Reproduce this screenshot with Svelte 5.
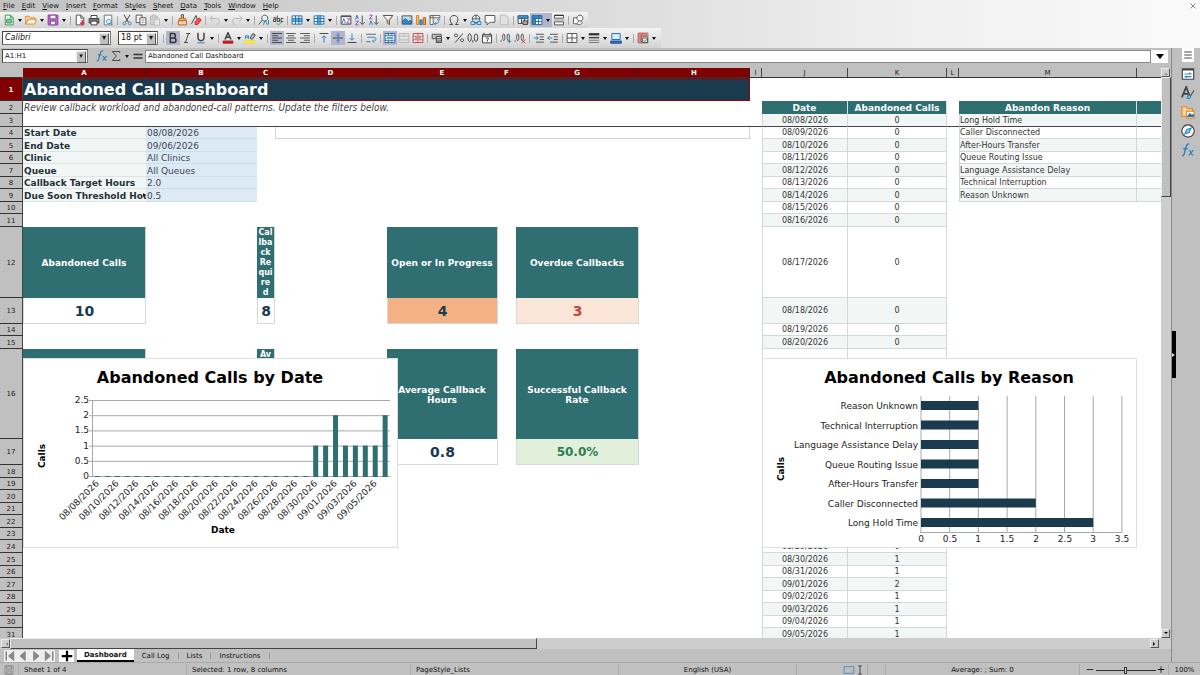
<script>
  const menus = ['File', 'Edit', 'View', 'Insert', 'Format', 'Styles', 'Sheet', 'Data', 'Tools', 'Window', 'Help'];
  const underlineAt = { Styles: 2 };

  // 16x16 icons: [path, stroke, fill, stroke width]
  const icons = {
    new: [['M3 1.5h7l3.5 3.5v9.5H3z', '#3a9a53', '#eaf7ec'], ['M5 7h6v5H5z', '#3a9a53', '#7fcb90'], ['M10 1.5V5h3.5', '#3a9a53', 'none']],
    open: [['M1 13.5V3h4.5l1.5 2h6v2', '#e0892a', '#fbe0b5'], ['M1 13.5L4 7h11.5l-2.8 6.5z', '#e0892a', '#fff1da']],
    save: [['M1.5 1.5H14.5v13H1.5z', '#8c3da0', '#b96bc9'], ['M4 1.5h8v5H4z', '#8c3da0', '#fff'], ['M4.5 9.5h7v5h-7z', '#8c3da0', '#fff']],
    pdf: [['M3 1.5h6l4 4v9H3z', '#555', '#fff'], ['M9 1.5v4h4', '#555', 'none'], ['M11 8v6M8.5 11.5L11 14l2.500-2.500', '#d33', 'none', 2]],
    print: [['M4 6V2h8v4', '#444', '#fff'], ['M1.5 6h13v6h-13z', '#444', '#777'], ['M4 9.5h8v5H4z', '#444', '#fff']],
    preview: [['M3 1.5h10v13H3z', '#777', '#fff'], ['M9 7a3 3 0 1 0 .1 0M11 12l3 3', '#2a87c8', '#d9effb']],
    cut: [['M4 1l6 10M12 1L6 11', '#444', 'none'], ['M4.5 10.5a2 2 0 1 0 .1 0M11.5 10.5a2 2 0 1 0 .1 0', '#2a87c8', 'none']],
    copy: [['M1.5 1.5h8v10h-8z', '#555', '#fff'], ['M6.5 5h8v9.5h-8z', '#555', '#fff'], ['M8.5 8h4M8.5 11h4', '#888', 'none']],
    paste: [['M2 3h9v11H2z', '#bbb', '#d2d2d2'], ['M7 7h7v8H7z', '#bbb', '#e8e8e8'], ['M4 1.5h5v3H4z', '#bbb', '#ddd']],
    clone: [['M7 1h3v5H7z', '#555', '#f5c06a'], ['M4 6h9v3H4z', '#c77c26', '#f7b95a'], ['M3 9h11v5.5H3z', '#c75a26', '#fbd9b0']],
    clear: [['M2 13L8 2l3 10', '#444', 'none'], ['M7 10l5-5 3 3-5 6H7z', '#c22', '#ee5a4a']],
    undo: [['M5 2L1.5 6 5 10M2 6h8c5 0 5 7 0 8', '#b5b5b5', 'none']],
    redo: [['M11 2l3.5 4L11 10M14 6H6c-5 0-5 7 0 8', '#b5b5b5', 'none']],
    find: [['M9 1.5a4 4 0 1 0 .1 0M6 8l-5 6', '#555', '#e4f3fb'], ['M7 14.5l2.5-6 3 6M14 8v6', '#2a87c8', 'none']],
    spell: [['M2 5h3v5H2V7h3M7 2v8h3V6H7M15 6h-3v4h3', '#444', 'none'], ['M6 12l2.5 2.5L14 10', '#39a257', 'none']],
    row: [['M1.5 2.5h13v11h-13z', '#2a6fa8', '#fff'], ['M1.5 6h13v4h-13z', '#2a87c8', '#5ab0e6'], ['M6 2.5v11M10.5 2.5v11', '#2a6fa8', 'none']],
    col: [['M1.5 2.5h13v11h-13z', '#2a6fa8', '#fff'], ['M6 2.5h4.5v11H6z', '#2a87c8', '#5ab0e6'], ['M1.5 6h13M1.5 10h13', '#2a6fa8', 'none']],
    sort: [['M1.5 2.5h13v11h-13z', '#444', '#fff'], ['M1.5 3.5h13', '#444', 'none'], ['M3 12l2-6 2 6', '#2a87c8', 'none'], ['M9 6.5h4L9 12h4', '#a54bb5', 'none']],
    asc: [['M2 7l2-5.5L6 7M3 5h2', '#2a87c8', 'none'], ['M2 9.5h4L2 14.5h4', '#a54bb5', 'none'], ['M11 2v12M8 11l3 3 3-3', '#555', 'none']],
    desc: [['M2 1.5h4L2 6.5h4', '#a54bb5', 'none'], ['M2 14.5L4 9l2 5.5', '#2a87c8', 'none'], ['M11 2v12M8 11l3 3 3-3', '#555', 'none']],
    filter: [['M1.5 2h13L10 8v6l-3-2V8z', '#555', '#fff'], ['M13 3L9 8v5', '#e0892a', 'none']],
    image: [['M1.5 2.5h13v11h-13z', '#555', '#bfe3f8'], ['M2 13V9l4-3 4 4 2-2 2 2v3z', '#2a6fa8', '#2a87c8'], ['M11 4.5h2', '#f0a030', 'none', 2]],
    chart: [['M2 2h3v12H2z', '#e0892a', '#f8b75a'], ['M6.5 8h3v6h-3z', '#2a6fa8', '#4a9fdc'], ['M11 5h3v9h-3z', '#c75a26', '#e9a03f']],
    pivot: [['M1.5 2h13v3h-13zM1.5 2v12h4V2', '#666', '#fff'], ['M8 13c5 0 5-2 5-6M11 8l2-2 2 2M9 11l-2 2 2 2', '#2a87c8', 'none']],
    omega: [['M2 14h4c-5-5-4-12 2-12s7 7 2 12h4', '#444', 'none']],
    link: [['M8 1.5a5 5 0 1 0 .1 0M3 6.5h10M8 1.5v6', '#555', '#e6f3fb'], ['M1.5 10h5v4h-5zM9.5 10h5v4h-5zM5 12h6', '#2a87c8', 'none']],
    comment: [['M1.5 2h13v9H8l-4 3.5V11H1.5z', '#555', '#fff']],
    header: [['M3 1.5h7l3.5 3.5v9.5H3z', '#bbb', '#e2e2e2']],
    define: [['M1.5 2.5h13v10h-13zM1.5 6h13M6 2.5v10M10 2.5v10', '#444', '#fff'], ['M1.5 2.5h13v3h-13z', '#2a6fa8', '#4a9fdc'], ['M8 9h6v5H8z', '#444', '#aaa']],
    freeze: [['M1.5 2h13v12h-13z', '#2a6fa8', '#fff'], ['M2 2h12v4H2zM2 6h4v8H2z', '#2a6fa8', '#2a87c8'], ['M10 2v12M6 10h8', '#2a6fa8', 'none']],
    split: [['M2 1.5h12v4H2zM2 10.5h12v4H2z', '#555', '#fff'], ['M2 2h12', '#333', 'none'], ['M1 8h14', '#999', 'none']],
    draw: [['M2 5h7v8H2z', '#666', '#fff'], ['M10.5 1.5a4 4 0 1 0 .1 0', '#555', '#fff'], ['M6 13.5l4-5 4 3-3 3z', '#777', '#eee']],
    bold: [['M4.5 2v12h4.5c4 0 4-6 0-6H4.5h4c3.5 0 3.5-6 0-6z', '#333', 'none', 2]],
    italic: [['M7 2h5M4 14h5M10 2L6 14', '#444', 'none']],
    underline: [['M4 1v6c0 6 8 6 8 0V1', '#444', 'none', 2], ['M3 14.5h10', '#2a87c8', 'none']],
    color: [['M4 10L8 1l4 9M5.5 7h5', '#444', 'none', 2], ['M1.5 12h13v3h-13z', '#c02020', '#c02020']],
    highlight: [['M8 8l4-6 3 2-4 6z', '#444', '#9bc8ea'], ['M2 9V5h4v4M2 7h4', '#2a87c8', 'none'], ['M1 11h13v4H1z', '#f4dc30', '#f9e94a']],
    left: [['M1.5 2h13M1.5 5h8M1.5 8h13M1.5 11h8M1.5 14h13', '#444', 'none']],
    center: [['M1.5 2h13M4 5h8M1.5 8h13M4 11h8M1.5 14h13', '#555', 'none']],
    right: [['M1.5 2h13M6.5 5h8M1.5 8h13M6.5 11h8M1.5 14h13', '#555', 'none']],
    top: [['M2 2h12', '#444', 'none'], ['M8 14V5M5 8l3-3 3 3', '#2a87c8', 'none']],
    middle: [['M1.5 8h13', '#444', 'none'], ['M8 1v5M6 4l2 2 2-2M8 15v-5M6 12l2-2 2 2', '#2a87c8', 'none']],
    bottom: [['M2 14h12', '#444', 'none'], ['M8 2v8M5 8l3 3 3-3', '#2a87c8', 'none']],
    wrap: [['M1.5 3h13M1.5 13h6', '#666', 'none'], ['M3 7h9c4 0 3 6-1 5M12 10l-2 2 2 2', '#2a87c8', 'none']],
    mergecenter: [['M1.5 2h13v12h-13zM1.5 5h13M1.5 11h13M6 2v3M10.5 2v3M6 11v3M10.5 11v3', '#2a6fa8', '#fff'], ['M4 8h8', '#2a87c8', 'none', 2]],
    merge: [['M1.5 2h13v12h-13zM1.5 5.5h13M1.5 10.5h13M8 2v3', '#b8b8b8', '#e2e2e2']],
    unmerge: [['M1.5 2h13v12h-13z', '#c44', '#fff'], ['M1.5 5.5h13M1.5 10.5h13M8 2v3M8 11v3', '#c44', 'none'], ['M4 8h8', '#444', 'none']],
    currency: [['M1.5 3h12v6h-12z', '#555', '#bbb'], ['M7 6h7v8H7zM7 9h7M7 12h7', '#444', '#ddd']],
    percent: [['M13 2L3 14M4 2.5a2 2 0 1 0 .1 0M12 9a2 2 0 1 0 .1 0', '#444', 'none']],
    number: [['M3.5 2.5c-3 0-3 10 0 10s3-10 0-10M12 2.5c-3 0-3 10 0 10s3-10 0-10M7.7 11v3', '#444', 'none']],
    date: [['M2 3.5h12v11H2zM4 1v3M12 1v3M2 5.5h12', '#444', '#fff'], ['M6 8h4l-2 5', '#444', 'none']],
    adddec: [['M1.500 11v2M5 2.5c-2 0-2 9 0 9s2-9 0-9M11 2.5c-2 0-2 9 0 9s2-9 0-9', '#555', 'none'], ['M12.5 10v5M10 12.5h5', '#2a87c8', 'none']],
    deldec: [['M1.500 11v2M5 2.5c-2 0-2 9 0 9s2-9 0-9M11 2.5c-2 0-2 9 0 9s2-9 0-9', '#555', 'none'], ['M10 10l5 5M15 10l-5 5', '#d33', 'none']],
    indent: [['M4 3h10.5M9 6.5h5.5M9 10h5.5M4 13.5h10.5', '#555', 'none'], ['M1 8h6M4.5 5.5L7 8l-2.5 2.5', '#2a87c8', 'none']],
    outdent: [['M4 3h10.5M9 6.5h5.5M9 10h5.5M4 13.5h10.5', '#555', 'none'], ['M7 8H1M3.5 5.5L1 8l2.5 2.5', '#2a87c8', 'none']],
    borders: [['M1.5 2h13v12h-13zM8 2v12M1.5 8h13', '#555', '#fff']],
    style: [['M1 3h14', '#333', 'none', 3], ['M1 7.5h14', '#444', 'none', 2], ['M1 11h14M1 14h14', '#777', 'none']],
    bordercolor: [['M2.5 2h11v8h-11z', '#2a6fa8', '#d7ecf9'], ['M1 12h14v3H1z', '#1e5b98', '#2a6fb4']],
    cond: [['M1.5 1.5h13v13h-13zM6 1.5v13M1.5 6h13M1.5 10h13', '#777', '#fff'], ['M2 2h3v12H2zM6 2h7v3H6z', '#d66', '#f08080'], ['M7 8h7v6H7z', '#555', '#eee'], ['M8.500 11l2 1.500 3-3', '#39a257', 'none']],
    properties: [['M1.5 2h13v12h-13z', '#444', '#fff'], ['M1.5 3h13', '#444', 'none', 2], ['M4 8h8M4 11h8M9.5 6.5L11 8M6.5 12.500L5 11', '#2a87c8', 'none']],
    styles: [['M1 13L6 1l4 11M3 9h6', '#444', 'none', 2], ['M7 14c0-4 3-4 4-3 0 3-2 4-4 3z', '#2a87c8', '#7fc0ea'], ['M11 11l4-6', '#555', 'none']],
    gallery: [['M1 13V2h5l1 2h6v9z', '#e0892a', '#fbd59b'], ['M6.5 7h8.5v8H6.5z', '#e0892a', '#fff'], ['M8 13l2-3 2 2 2-1v2z', '#2a6fa8', '#2a87c8']],
    navigator: [['M8 1a7 7 0 1 0 .1 0', '#444', '#fff'], ['M11.5 4.5L9.5 9.5l-5 2 2-5z', '#2a87c8', '#8fcbf0']],
    fx: [['M1 14.5c3 1 3-4 4-7.500s2-7 4.500-5.500M2.500 6.500h5', '#2a80bd', 'none', 1.6], ['M9 8.500c2-1 2 6 5 5M14.500 8.500c-2-.5-3 5-6 5', '#2a80bd', 'none', 1.5]],
    sum: [['M13 4V2H3l5.5 6L3 14h10v-2', '#444', 'none']],
    equals: [['M2 6h12M2 10.5h12', '#333', 'none', 2]],
    lines: [['M3 4h10M3 8h10M3 12h10', '#444', 'none']],
    disk: [['M1.5 1.5h13v13h-13zM4 1.5h8v5H4zM4.5 9.5h7v5h-7z', '#888', '#bbb']],
    first: [['M3 2v12', '#888', 'none', 2], ['M13 2L6 8l7 6z', '#888', '#888']],
    prev: [['M11 2L4 8l7 6z', '#888', '#888']],
    next: [['M5 2l7 6-7 6z', '#888', '#888']],
    last: [['M13 2v12', '#888', 'none', 2], ['M3 2l7 6-7 6z', '#888', '#888']],
    plus: [['M8 1v14M1 8h14', '#000', 'none', 3]],
    close: [['M3 3l10 10M13 3L3 13', '#444', 'none']],
    selmode: [['M1.5 3.5h13v9h-13z', '#4a90c8', 'none']],
    cursor: [['M5 1.5h6M5 14.5h6M8 1.5v13', '#333', 'none']]
  };

  // '|' is a separator, 'v' a drop-down arrow, '*' marks a pressed button
  const standardBar = 'new v open v save v | pdf print preview | cut copy paste v | clone clear | undo v redo v | find spell | row v col v | sort asc desc filter | image chart pivot | omega v link comment header | define *freeze *v split | draw'.split(' ');
  const formatBar = '| *bold italic underline v | color v highlight v | *left center right | top *middle bottom | wrap | *mergecenter merge unmerge | currency v percent number date | adddec deldec | indent outdent | borders v style v bordercolor v | cond v'.split(' ');
  const sidebarItems = ['properties', 'styles', 'gallery', 'navigator', 'fx'];

  const columns = [
    ['A', 123], ['B', 111], ['C', 18], ['D', 112], ['E', 111], ['F', 18], ['G', 123],
    ['H', 111], ['I', 12], ['J', 86], ['K', 99], ['L', 12], ['M', 178], ['N', 120]
  ];
  const rowHeights = [
    23, 13, 13, 12, 13, 12, 13, 12, 13, 12, 13, 71, 26, 12, 13, 90,
    26, 13, 12, 13, 12, 13, 12, 13, 13, 12, 13, 12, 13, 12, 13
  ];

  const counts = [...Array(22).fill(0), 1, 1, 2, 1, 1, 1, 1, 2];
  const days = counts.map((count, i) => {
    const d = new Date(2026, 7, 8 + i);
    const mm = String(d.getMonth() + 1).padStart(2, '0');
    const dd = String(d.getDate()).padStart(2, '0');
    return { label: `${mm}/${dd}/2026`, count };
  });
  const reasons = [
    ['Long Hold Time', 3], ['Caller Disconnected', 2], ['After-Hours Transfer', 1], ['Queue Routing Issue', 1],
    ['Language Assistance Delay', 1], ['Technical Interruption', 1], ['Reason Unknown', 1]
  ];
  const filters = [
    ['Start Date', '08/08/2026'], ['End Date', '09/06/2026'], ['Clinic', 'All Clinics'],
    ['Queue', 'All Queues'], ['Callback Target Hours', '2.0'], ['Due Soon Threshold Hours', '0.5']
  ];

  const cells = {
    A1: { text: 'Abandoned Call Dashboard', cls: 'title', span: 8 },
    A2: { text: 'Review callback workload and abandoned-call patterns. Update the filters below.', cls: 'subtitle', span: 8 },
    D4: { text: '', cls: 'outlined', span: 5 },
    J2: { text: 'Date', cls: 'head' },
    K2: { text: 'Abandoned Calls', cls: 'head' },
    M2: { text: 'Abandon Reason', cls: 'head' },
    N2: { text: '', cls: 'head' },
    A12: { text: 'Abandoned Calls', cls: 'kpi' },
    C12: { text: 'Callback Required', cls: 'kpi narrow' },
    E12: { text: 'Open or In Progress', cls: 'kpi' },
    G12: { text: 'Overdue Callbacks', cls: 'kpi' },
    A13: { text: '10', cls: 'value' },
    C13: { text: '8', cls: 'value' },
    E13: { text: '4', cls: 'value orange' },
    G13: { text: '3', cls: 'value pink' },
    A16: { text: '', cls: 'kpi' },
    C16: { text: 'Av', cls: 'kpi narrow upper' },
    E16: { text: 'Average Callback Hours', cls: 'kpi' },
    G16: { text: 'Successful Callback Rate', cls: 'kpi' },
    A17: { text: '', cls: 'value' },
    E17: { text: '0.8', cls: 'value' },
    G17: { text: '50.0%', cls: 'value green' }
  };
  filters.forEach(([name, value], i) => {
    cells[`A${i + 4}`] = { text: name, cls: name.length > 22 ? 'label clipped' : 'label' };
    cells[`B${i + 4}`] = { text: value, cls: 'input' };
  });
  days.slice(0, 29).forEach((day, i) => {
    const band = i % 2 ? '' : ' band';
    cells[`J${i + 3}`] = { text: day.label, cls: 'data first' + band };
    cells[`K${i + 3}`] = { text: day.count, cls: 'data' + band };
  });
  reasons.forEach(([name], i) => {
    const band = i % 2 ? '' : ' band';
    cells[`M${i + 3}`] = { text: name, cls: 'data first reason' + band };
    cells[`N${i + 3}`] = { text: '', cls: 'data' + band };
  });

  function rowCells(row) {
    const out = [];
    for (let c = 0; c < columns.length; ) {
      const cell = cells[columns[c][0] + row] || { text: '', cls: '' };
      out.push(cell);
      c += cell.span || 1;
    }
    return out;
  }

  const sheets = ['Dashboard', 'Call Log', 'Lists', 'Instructions'];
  let activeSheet = $state('Dashboard');
  let zoom = $state(50);
</script>

{#snippet icon(name, size = 12)}
  <svg class="icon" width={size} height={size} viewBox="0 0 16 16" aria-hidden="true">
    {#each icons[name] as [d, stroke, fill, width]}
      <path {d} {stroke} {fill} stroke-width={width || 1.3} />
    {/each}
  </svg>
{/snippet}

{#snippet tools(items)}
  {#each items as item}
    {@const name = item.replace('*', '')}
    {#if name === '|'}
      <span class="sep"></span>
    {:else if name === 'v'}
      <button class="drop" class:pressed={item[0] === '*'} aria-label="More options"></button>
    {:else}
      <button class="tool" class:pressed={item[0] === '*'} aria-label={name}>{@render icon(name)}</button>
    {/if}
  {/each}
{/snippet}

<div class="app">
  <header class="top">
    <nav class="menubar">
      {#each menus as menu}
        {@const at = underlineAt[menu] || 0}
        <button>{menu.slice(0, at)}<u>{menu[at]}</u>{menu.slice(at + 1)}</button>
      {/each}
      <button class="close" aria-label="Close">{@render icon('close', 8)}</button>
    </nav>
    <div class="toolbar">{@render tools(standardBar)}</div>
    <div class="toolbar format">
      <label class="combo font"><select aria-label="Font name"><option>Calibri</option></select></label>
      <label class="combo size"><select aria-label="Font size"><option>18 pt</option></select></label>
      {@render tools(formatBar)}
    </div>
  </header>

  <div class="work">
    <div class="main">
      <div class="formula">
        <label class="combo name"><select aria-label="Name box"><option>A1:H1</option></select></label>
        <button class="tool" aria-label="Function wizard">{@render icon('fx')}</button>
        <button class="tool" aria-label="Sum">{@render icon('sum')}</button>
        <button class="drop" aria-label="More functions"></button>
        <button class="tool" aria-label="Formula">{@render icon('equals')}</button>
        <input type="text" aria-label="Input line" value="Abandoned Call Dashboard" />
        <button class="expand" aria-label="Expand formula bar"></button>
      </div>

      <div class="view">
        <div class="grid">
          <table>
            <colgroup>
              <col class="rowcol" />
              {#each columns as [, width]}
                <col style="width: {width}px" />
              {/each}
            </colgroup>
            <thead>
              <tr>
                <th class="corner"></th>
                {#each columns as [name], i}
                  <th class="colhead" class:selected={i < 8}>{name}</th>
                {/each}
              </tr>
            </thead>
            <tbody>
              {#each rowHeights as height, r}
                <tr class:frozen={r === 2} style="height: {height}px">
                  <th class="rowhead" class:selected={r === 0}>{r + 1}</th>
                  {#each rowCells(r + 1) as cell}
                    <td class={cell.cls} colspan={cell.span || 1}>{cell.text}</td>
                  {/each}
                </tr>
              {/each}
            </tbody>
          </table>

          <svg class="chart by-date" width="375" height="190" viewBox="1 1 373 188">
            <text class="chart-title" x="187" y="25" text-anchor="middle">Abandoned Calls by Date</text>
            {#each [0, 0.5, 1, 1.5, 2, 2.5] as tick}
              <line x1="66" x2="367" y1={118.5 - tick * 30.4} y2={118.5 - tick * 30.4} />
              <text x="66" y={Math.round(121 - tick * 30.4)} text-anchor="end">{tick}</text>
            {/each}
            <line x1="69.5" x2="69.5" y1="42" y2="119" />
            {#each days as day, i}
              {@const x = 69.5 + (i + 0.5) * 9.92}
              <rect class="teal" x={x - 2.5} y={118 - day.count * 30.4} width="5" height={day.count * 30.4 + 1} />
              {#if i % 2 === 0}
                <text transform="translate({x + 2} 126) rotate(-45)" text-anchor="end">{day.label}</text>
              {/if}
            {/each}
            <text class="axis" transform="translate(22 98) rotate(-90)" text-anchor="middle">Calls</text>
            <text class="axis" x="200" y="175" text-anchor="middle">Date</text>
          </svg>

          <svg class="chart by-reason" width="375" height="190" viewBox="1 1 373 188">
            <text class="chart-title" x="187" y="25" text-anchor="middle">Abandoned Calls by Reason</text>
            {#each [0, 0.5, 1, 1.5, 2, 2.5, 3, 3.5] as tick}
              <line x1={159 + tick * 57.4} x2={159 + tick * 57.4} y1="38" y2="175" />
              <text x={Math.round(159 + tick * 57.4)} y="184" text-anchor="middle">{tick}</text>
            {/each}
            <line x1="158" x2="360" y1="174.5" y2="174.5" />
            {#each reasons as [name, count], i}
              <rect class="navy" x="159" y={160 - i * 19.5} width={count * 57.4} height="9" />
              <text x="156" y={Math.round(168 - i * 19.5)} text-anchor="end">{name}</text>
            {/each}
            <text class="axis" transform="translate(22 111) rotate(-90)" text-anchor="middle">Calls</text>
          </svg>
        </div>
        <div class="vscroll">
          <button class="arrow up" aria-label="Scroll up"></button>
          <div class="thumb"></div>
          <button class="arrow down" aria-label="Scroll down"></button>
        </div>
      </div>

      <div class="hscroll">
        <button class="arrow back" aria-label="Scroll left"></button>
        <div class="thumb"></div>
        <button class="arrow forward" aria-label="Scroll right"></button>
      </div>

      <div class="tabs">
        <div class="tabnav">
          {#each ['first', 'prev', 'next', 'last'] as name}
            <button aria-label={name}>{@render icon(name, 12)}</button>
          {/each}
        </div>
        <button class="add" aria-label="Add sheet">{@render icon('plus', 12)}</button>
        {#each sheets as sheet}
          <button class="tab" class:active={sheet === activeSheet} onclick={() => (activeSheet = sheet)}>{sheet}</button>
        {/each}
      </div>
    </div>

    <aside class="sidebar">
      <button class="settings" aria-label="Sidebar settings">{@render icon('lines')}</button>
      {#each sidebarItems as name}
        <button aria-label={name}>{@render icon(name, 14)}</button>
      {/each}
      <button class="handle" aria-label="Hide sidebar"></button>
    </aside>
  </div>

  <footer class="status">
    <span class="mid">{@render icon('disk', 10)}</span>
    <span>Sheet 1 of 4</span>
    <span>Selected: 1 row, 8 columns</span>
    <span>PageStyle_Lists</span>
    <span class="mid">English (USA)</span>
    <span class="mid mode">{@render icon('selmode', 12)}{@render icon('cursor', 10)}</span>
    <span></span>
    <span class="mid">Average: ; Sum: 0</span>
    <span class="mid zoom">
      <button aria-label="Zoom out">−</button>
      <input type="range" min="0" max="100" bind:value={zoom} aria-label="Zoom" />
      <button aria-label="Zoom in">+</button>
    </span>
    <span class="mid">100%</span>
  </footer>
</div>

<style>
  :global(body) {
    background: #c0c0c0;
  }

  .app {
    height: 100vh;
    display: flex;
    flex-direction: column;
    overflow: hidden;
    background: #c0c0c0;
    color: #111;
    font-family: "DejaVu Sans", sans-serif;
    font-size: 7px;
    line-height: 10px;
  }

  .app * {
    box-sizing: border-box;
  }

  button,
  select,
  input {
    margin: 0;
    padding: 0;
    border: 0;
    background: none;
    color: inherit;
    font: inherit;
  }

  .icon {
    display: block;
    flex: none;
  }

  .top {
    height: 48px;
    flex: none;
    background: linear-gradient(to right, #c2c2c2, #dcdcdc 50%, #efefef 75%, #fafafa);
  }

  .menubar {
    display: flex;
    height: 12px;
    gap: 7px;
    padding: 0 3px;
    align-items: center;
  }

  .close {
    margin-left: auto;
    background: #fff;
  }

  .toolbar {
    display: flex;
    align-items: center;
    width: max-content;
    height: 16px;
    padding: 0 3px 0 2px;
    background: linear-gradient(#f4f4f4, #d2d2d2);
  }

  .toolbar.format {
    height: 20px;
  }

  .tool {
    width: 14px;
    height: 14px;
    display: flex;
    align-items: center;
    justify-content: center;
    flex: none;
  }

  .drop {
    width: 8px;
    height: 14px;
    display: flex;
    align-items: center;
    justify-content: center;
    flex: none;
  }

  .drop::after {
    content: '';
    border: 2px solid transparent;
    border-top: 3px solid #111;
    border-bottom: 0;
  }

  .pressed {
    background: #b4b4cc;
  }

  .sep {
    width: 5px;
    height: 9px;
    flex: none;
    background: linear-gradient(#aaa, #aaa) center / 1px 100% no-repeat;
  }

  .combo {
    position: relative;
    height: 14px;
    border: 1px solid #777;
    border-top-color: #444;
    border-left-color: #444;
    background: #fff;
    flex: none;
  }

  .combo select {
    appearance: none;
    display: block;
    width: 100%;
    height: 12px;
    padding-left: 2px;
    line-height: 12px;
  }

  .combo::after {
    content: '▾';
    position: absolute;
    top: 1px;
    right: 1px;
    width: 8px;
    height: 10px;
    border: 1px solid;
    border-color: #eee #555 #555 #eee;
    background: #c0c0c0;
    text-align: center;
    line-height: 8px;
    pointer-events: none;
  }

  .combo.font {
    width: 109px;
    font-size: 8px;
    font-style: italic;
    margin-right: 7px;
  }

  .combo.size {
    width: 40px;
    font-size: 8px;
    margin-right: 3px;
  }

  .combo.name {
    width: 86px;
    margin-right: 7px;
  }

  .work {
    flex: 1;
    min-height: 0;
    display: flex;
  }

  .main {
    flex: 1;
    min-width: 0;
    display: flex;
    flex-direction: column;
    border-right: 1px solid #888;
  }

  .formula {
    height: 20px;
    flex: none;
    display: flex;
    align-items: center;
    padding: 0 3px 4px 2px;
  }

  .formula input {
    flex: 1;
    height: 13px;
    padding-left: 2px;
    border: 1px solid #888;
    background: #fff;
  }

  .expand {
    width: 17px;
    height: 13px;
    background: #fff;
    display: flex;
    align-items: center;
    justify-content: center;
  }

  .expand::after {
    content: '';
    border: 4px solid transparent;
    border-top: 5px solid #000;
    border-bottom: 0;
  }

  .view {
    flex: 1;
    min-height: 0;
    display: flex;
  }

  .grid {
    position: relative;
    flex: 1;
    min-width: 0;
    overflow: hidden;
    background: #fff;
  }

  table {
    width: 0;
    table-layout: fixed;
    border-collapse: separate;
    border-spacing: 0;
    font-size: 8px;
    color: #333;
  }

  .rowcol {
    width: 23px;
  }

  th,
  td {
    padding: 1px 1px 0;
    overflow: hidden;
    white-space: nowrap;
  }

  .corner,
  .colhead,
  .rowhead {
    background: #c0c0c0;
    color: #222;
    font-size: 7px;
    font-weight: normal;
    border-right: 1px solid #444;
    border-bottom: 1px solid #333;
  }

  .corner,
  .colhead {
    height: 10px;
    padding: 0;
    line-height: 8px;
  }

  .corner {
    border-right-color: #c0c0c0;
  }

  .colhead.selected,
  .rowhead.selected {
    background: #800000;
    color: #fff;
    font-weight: bold;
  }

  .colhead.selected {
    border-right-color: #501030;
  }

  .frozen > * {
    border-bottom: 1px solid #444;
  }

  .title {
    padding-top: 0;
    background: #1a3a4e;
    color: #fff;
    font-size: 16px;
    line-height: 20px;
    font-weight: bold;
    border: 1px solid #900;
    border-left: 0;
  }

  .subtitle {
    font-family: "DejaVu Sans Condensed", "DejaVu Sans", sans-serif;
    font-size: 10px;
    font-style: italic;
    color: #444;
  }

  .label {
    background: #f2f7f6;
    color: #23323a;
    font-size: 9px;
    font-weight: bold;
    border-bottom: 1px solid #dde4e4;
  }

  .clipped {
    position: relative;
  }

  .clipped::after {
    content: '';
    position: absolute;
    top: 4px;
    right: 0;
    border: 2px solid transparent;
    border-left: 3px solid #600;
    border-right: 0;
  }

  .input {
    background: #dceaf6;
    color: #445;
    font-size: 9px;
    border-bottom: 1px solid #cfdfe8;
  }

  .outlined {
    border: 1px solid #d4d4d4;
    border-top: 0;
  }

  .head {
    background: #2f6e71;
    color: #fff;
    font-size: 9px;
    font-weight: bold;
    text-align: center;
    border-right: 1px solid #d5e0e0;
  }

  .data {
    text-align: center;
    border-right: 1px solid #d0dada;
    border-bottom: 1px solid #d0dada;
  }

  .data.first {
    border-left: 1px solid #d0dada;
  }

  .frozen .data {
    border-bottom-color: #444;
  }

  .band {
    background: #f2f7f6;
  }

  .data.reason {
    text-align: left;
    padding-left: 0;
  }

  .kpi {
    background: #2f6e71;
    color: #fff;
    font-weight: bold;
    text-align: center;
    white-space: normal;
    border-right: 1px solid #c9d6d6;
    font-size: 9px;
  }

  .narrow {
    font-size: 8px;
    word-break: break-all;
  }

  .upper {
    vertical-align: top;
  }

  .value {
    color: #1a3a4e;
    font-size: 14px;
    line-height: 16px;
    font-weight: bold;
    text-align: center;
    border: 1px solid #d4d9d9;
    border-top: 0;
  }

  .orange {
    background: #f4b183;
  }

  .pink {
    background: #fbe5d8;
    color: #c0473c;
  }

  .green {
    background: #e2efda;
    color: #2e7d4f;
    font-size: 12px;
  }

  .chart {
    position: absolute;
    top: 290px;
    border: 1px solid #dcdfdf;
    background: #fff;
    font-size: 9px;
  }

  .chart text {
    fill: #222;
  }

  .chart .chart-title {
    fill: #000;
    font-size: 16px;
    font-weight: bold;
  }

  .chart .axis {
    fill: #000;
    font-weight: bold;
  }

  .chart line {
    stroke: #a8a8a8;
  }

  .by-date {
    left: 23px;
  }

  .by-reason {
    left: 762px;
  }

  .chart .teal {
    fill: #2f6e71;
  }

  .chart .navy {
    fill: #1a3a4e;
  }

  .vscroll {
    width: 10px;
    flex: none;
    display: flex;
    flex-direction: column;
    background: #cdcdcd;
  }

  .thumb {
    background: #c0c0c0;
    border: 1px solid;
    border-color: #eee #444 #444 #eee;
  }

  .vscroll .thumb {
    height: 21%;
  }

  .arrow {
    width: 9px;
    height: 9px;
    display: flex;
    align-items: center;
    justify-content: center;
    flex: none;
    border: 1px solid;
    border-color: #eee #555 #555 #eee;
  }

  .arrow::after {
    content: '';
    border: 2px solid transparent;
  }

  .up::after {
    border-bottom-color: #888;
  }

  .down {
    margin-top: auto;
  }

  .down::after {
    border-top-color: #000;
  }

  .back::after {
    border-right-color: #888;
  }

  .forward {
    margin-left: auto;
  }

  .forward::after {
    border-left-color: #000;
  }

  .hscroll {
    height: 11px;
    flex: none;
    display: flex;
    align-items: center;
    padding: 0 12px 0 1px;
    background: #cdcdcd;
  }

  .hscroll .thumb {
    width: 45.5%;
    height: 11px;
  }

  .tabs {
    height: 13px;
    flex: none;
    display: flex;
    align-items: center;
    padding-left: 4px;
  }

  .tabnav {
    display: flex;
    gap: 1px;
    margin-right: 4px;
    background: #eee;
  }

  .add {
    width: 15px;
    height: 12px;
    margin-right: 3px;
    padding-left: 2px;
    background: #fff;
  }

  .tab {
    height: 12px;
    padding: 0 9px 0 8px;
    background: linear-gradient(#999, #999) right / 1px 6px no-repeat;
  }

  .tab.active {
    height: 13px;
    padding: 0 7px;
    background: #fff;
    border-bottom: 2px solid #000;
    font-weight: bold;
  }

  .sidebar {
    position: relative;
    width: 28px;
    flex: none;
    display: flex;
    flex-direction: column;
    align-items: center;
    gap: 5px;
    padding-left: 4px;
  }

  .settings {
    padding: 1px 0;
    background: #fff;
  }

  .handle {
    position: absolute;
    left: 0;
    top: 283px;
    width: 4px;
    height: 47px;
    background: #000;
  }

  .handle::after {
    content: '';
    display: block;
    border: 2px solid transparent;
    border-left: 3px solid #ddd;
    border-right: 0;
  }

  .status {
    height: 13px;
    flex: none;
    display: grid;
    grid-template-columns: 19px 168fr 224fr 208fr 178fr 71fr 18fr 194fr 89px 31px;
    align-items: end;
    border-top: 1px solid #aaa;
  }

  .status > span {
    padding: 1px 0 0 5px;
    border-right: 1px solid #aaa;
    height: 11px;
    white-space: nowrap;
  }

  .status > span:last-child {
    border-right: 0;
  }

  .status > .mid {
    display: flex;
    align-items: center;
    justify-content: center;
    padding: 1px 0 0;
  }

  .status > .mode {
    justify-content: flex-end;
    padding-right: 2px;
  }

  .status > .zoom {
    padding-left: 3px;
  }

  .zoom button {
    width: 11px;
    font-size: 10px;
    line-height: 10px;
  }

  .zoom input {
    appearance: none;
    width: 60px;
    height: 9px;
    background: linear-gradient(#333, #333) center / 100% 1px no-repeat;
  }

  .zoom input::-webkit-slider-thumb {
    appearance: none;
    width: 3px;
    height: 7px;
    border: 1px solid #333;
    background: #ddd;
  }
</style>
